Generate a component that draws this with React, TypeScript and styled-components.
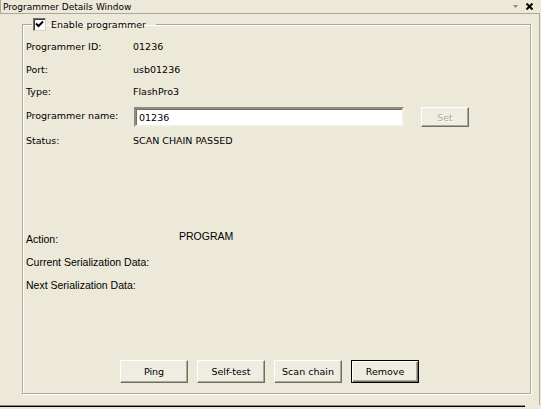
import styled, { createGlobalStyle } from "styled-components";

const GlobalStyle = createGlobalStyle`
  *, *::before, *::after { box-sizing: border-box; }
  html, body { margin: 0; padding: 0; background: #ece9d8; }
  body {
    font-family: "DejaVu Sans", "Liberation Sans", sans-serif;
    font-size: 9.5px;
    color: #000;
  }
`;

const Window = styled.div`
  width: 541px;
  height: 409px;
  display: flex;
  flex-direction: column;
  background: #ece9d8;
  overflow: hidden;
`;

const TitleBar = styled.div`
  width: 540px;
  height: 14px;
  display: flex;
  align-items: center;
  padding: 0 7px 0 2px;
  font-size: 9px;
  border-left: 1px solid #aca899;
  border-bottom: 1px solid #aca899;
  white-space: nowrap;
`;

const TitleTools = styled.div`
  margin-left: auto;
  display: flex;
  align-items: center;
  gap: 8px;
`;

const Body = styled.div`
  width: 540px;
  height: 391px;
  padding: 4px 0 0 22px;
  border-right: 1px solid #aca899;
`;

const BottomEdge = styled.div`
  width: 525px;
  height: 2px;
  border-top: 1px solid #8d8b80;
  background: #000;
`;

const Group = styled.fieldset`
  margin: 0;
  min-width: 0;
  width: 509px;
  height: 376px;
  padding: 0 0 10px 3px;
  border: 1px solid #aca899;
  box-shadow: inset 1px 1px 0 #fff, 1px 1px 0 #fff;
  display: flex;
  flex-direction: column;
`;

const Legend = styled.legend`
  display: flex;
  align-items: center;
  gap: 5px;
  height: 13px;
  margin-left: 6px;
  padding: 0 10px 0 1px;
  white-space: nowrap;
`;

const CheckBox = styled.span`
  width: 13px;
  height: 13px;
  display: flex;
  align-items: center;
  justify-content: center;
  background: #fff;
  border-top: 1px solid #716f64;
  border-left: 1px solid #716f64;
  border-right: 1px solid #d4d0c8;
  border-bottom: 1px solid #d4d0c8;
  box-shadow: inset 1px 1px 0 #404040;
`;

const Row = styled.div<{ $h: number; $mt?: number }>`
  display: flex;
  align-items: center;
  height: ${(p) => p.$h}px;
  margin-top: ${(p) => p.$mt ?? 0}px;
  white-space: nowrap;
`;

const Label = styled.span<{ $raise?: number }>`
  width: 107px;
  flex: none;
  padding-bottom: ${(p) => p.$raise ?? 0}px;
`;

const Value = styled.span``;

const LowerRow = styled(Row)`
  font-family: "Liberation Sans", Arial, sans-serif;
  font-size: 10.5px;
`;

const ActionValue = styled.span`
  margin-left: 46px;
  padding-bottom: 6px;
`;

const TextInput = styled.input`
  width: 270px;
  height: 20px;
  margin: 0 0 0 1px;
  padding: 0 0 0 3px;
  font: inherit;
  color: #000;
  background: #fff;
  border-top: 2px solid #8d8b80;
  border-left: 2px solid #8d8b80;
  border-right: 2px solid #f1efe2;
  border-bottom: 2px solid #f1efe2;
  box-shadow: inset 1px 1px 0 #716f64;
  outline: none;
`;

const Button = styled.button<{ $w: number; $h: number; $default?: boolean }>`
  width: ${(p) => p.$w}px;
  height: ${(p) => p.$h}px;
  flex: none;
  padding: 0;
  font: inherit;
  color: #000;
  background: #efede2;
  border: 1px solid ${(p) => (p.$default ? "#000" : "transparent")};
  border-top-color: ${(p) => (p.$default ? "#000" : "#fff")};
  border-left-color: ${(p) => (p.$default ? "#000" : "#fff")};
  border-right-color: ${(p) => (p.$default ? "#000" : "#716f64")};
  border-bottom-color: ${(p) => (p.$default ? "#000" : "#716f64")};
  box-shadow: ${(p) =>
    p.$default
      ? "inset 1px 1px 0 #fff, inset -1px -1px 0 #716f64, inset -2px -2px 0 #aca899"
      : "inset -1px -1px 0 #aca899"};

  &:disabled {
    color: #aca899;
    text-shadow: 1px 1px 0 #fff;
  }
`;

const SetButton = styled(Button)`
  margin-left: 17px;
`;

const ButtonRow = styled.div`
  margin-top: auto;
  display: flex;
  gap: 9px;
  padding-left: 94px;
`;

function App() {
  return (
    <>
      <GlobalStyle />
      <Window>
        <TitleBar>
          Programmer Details Window
          <TitleTools>
            <svg width="5" height="3" viewBox="0 0 5 3">
              <polygon points="0,0 5,0 2.5,3" fill="#8d8b80" />
            </svg>
            <svg width="7" height="7" viewBox="0 0 7 7">
              <path d="M0.5 0.5 L6.5 6.5 M6.5 0.5 L0.5 6.5" stroke="#000" strokeWidth="2" />
            </svg>
          </TitleTools>
        </TitleBar>

        <Body>
          <Group>
            <Legend>
              <CheckBox>
                <svg width="9" height="9" viewBox="0 0 9 9">
                  <polyline points="1,3.5 3.5,6 8,1.5" fill="none" stroke="#000" strokeWidth="2" />
                </svg>
              </CheckBox>
              Enable programmer
            </Legend>

            <Row $h={23} $mt={4}>
              <Label>Programmer ID:</Label>
              <Value>01236</Value>
            </Row>
            <Row $h={22}>
              <Label>Port:</Label>
              <Value>usb01236</Value>
            </Row>
            <Row $h={22}>
              <Label>Type:</Label>
              <Value>FlashPro3</Value>
            </Row>
            <Row $h={22} $mt={4}>
              <Label $raise={4}>Programmer name:</Label>
              <TextInput defaultValue="01236" />
              <SetButton $w={48} $h={20} disabled>
                Set
              </SetButton>
            </Row>
            <Row $h={25}>
              <Label>Status:</Label>
              <Value>SCAN CHAIN PASSED</Value>
            </Row>

            <LowerRow $h={23} $mt={74}>
              <Label>Action:</Label>
              <ActionValue>PROGRAM</ActionValue>
            </LowerRow>
            <LowerRow $h={23}>
              <Label>Current Serialization Data:</Label>
            </LowerRow>
            <LowerRow $h={23}>
              <Label>Next Serialization Data:</Label>
            </LowerRow>

            <ButtonRow>
              <Button $w={68} $h={23}>Ping</Button>
              <Button $w={68} $h={23}>Self-test</Button>
              <Button $w={68} $h={23}>Scan chain</Button>
              <Button $w={68} $h={23} $default>
                Remove
              </Button>
            </ButtonRow>
          </Group>
        </Body>
        <BottomEdge />
      </Window>
    </>
  );
}

export default App;
